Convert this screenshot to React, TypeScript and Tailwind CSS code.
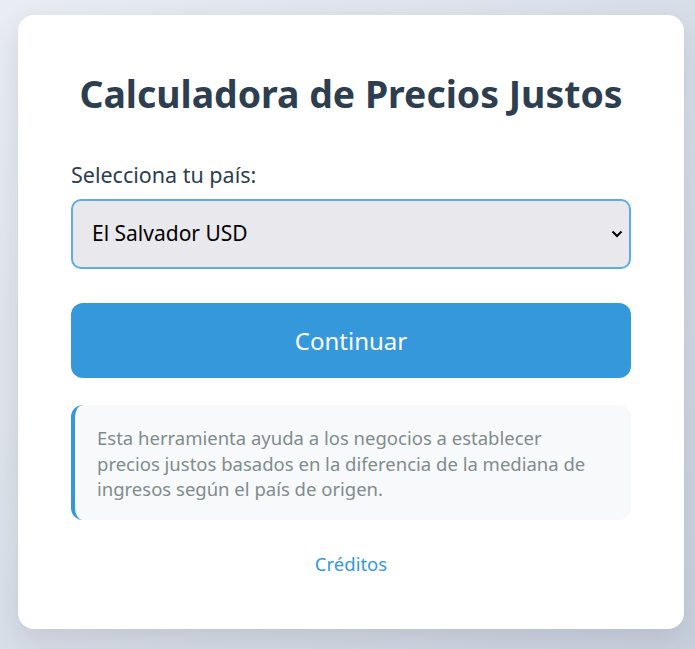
import { useState } from "react";

const countries = [
  "El Salvador USD",
  "Guatemala GTQ",
  "Honduras HNL",
  "México MXN",
  "Estados Unidos USD",
];

export default function App() {
  const [country, setCountry] = useState(countries[0]);

  return (
    <div className="min-h-screen bg-gradient-to-br from-[#e9edf3] to-[#c8d0de] px-[18px] pt-[15px] pb-5 font-['Noto_Sans',sans-serif]">
      <div className="w-[666px] rounded-[16px] bg-white px-[53px] pt-[52px] pb-[52px] shadow-[0_10px_30px_rgba(0,0,0,0.1)]">
        <h1 className="text-center text-[37.4px] font-bold leading-[54px] text-[#2c3e50]">
          Calculadora de Precios Justos
        </h1>

        <label className="mt-[38px] block text-[21.5px] leading-[32px] text-[#2c3e50]">
          Selecciona tu país:
        </label>
        <div className="relative mt-[8px]">
          <select
            value={country}
            onChange={(e) => setCountry(e.target.value)}
            className="block h-[70px] w-full appearance-none rounded-[10px] border-2 border-[#5dade2] bg-[#e8e8ed] pl-[19px] pr-10 text-[21px] text-black outline-none"
          >
            {countries.map((c) => (
              <option key={c}>{c}</option>
            ))}
          </select>
          {/* dropdown chevron */}
          <svg
            className="pointer-events-none absolute right-[8px] top-1/2 -translate-y-1/2"
            width="12"
            height="8"
            viewBox="0 0 12 8"
            fill="none"
          >
            <path d="M1.5 1.5 6 6l4.5-4.5" stroke="#000" strokeWidth="2" />
          </svg>
        </div>

        <button className="mt-[34px] block h-[75px] w-full rounded-[12px] bg-[#3498db] text-[24px] text-white">
          Continuar
        </button>

        <div className="mt-[27px] rounded-[12px] border-l-4 border-[#3498db] bg-[#f7f9fa] pt-[20px] pb-[18.5px] pl-[22px] pr-[40px] text-[18.5px] leading-[25.5px] text-[#7f8c8d]">
          Esta herramienta ayuda a los negocios a establecer precios justos basados en la diferencia de la mediana de ingresos según el país de origen.
        </div>

        <div className="mt-[29.5px] text-center text-[18.5px] leading-[27px]">
          <a href="#" className="text-[#3498db]">
            Créditos
          </a>
        </div>
      </div>
    </div>
  );
}
